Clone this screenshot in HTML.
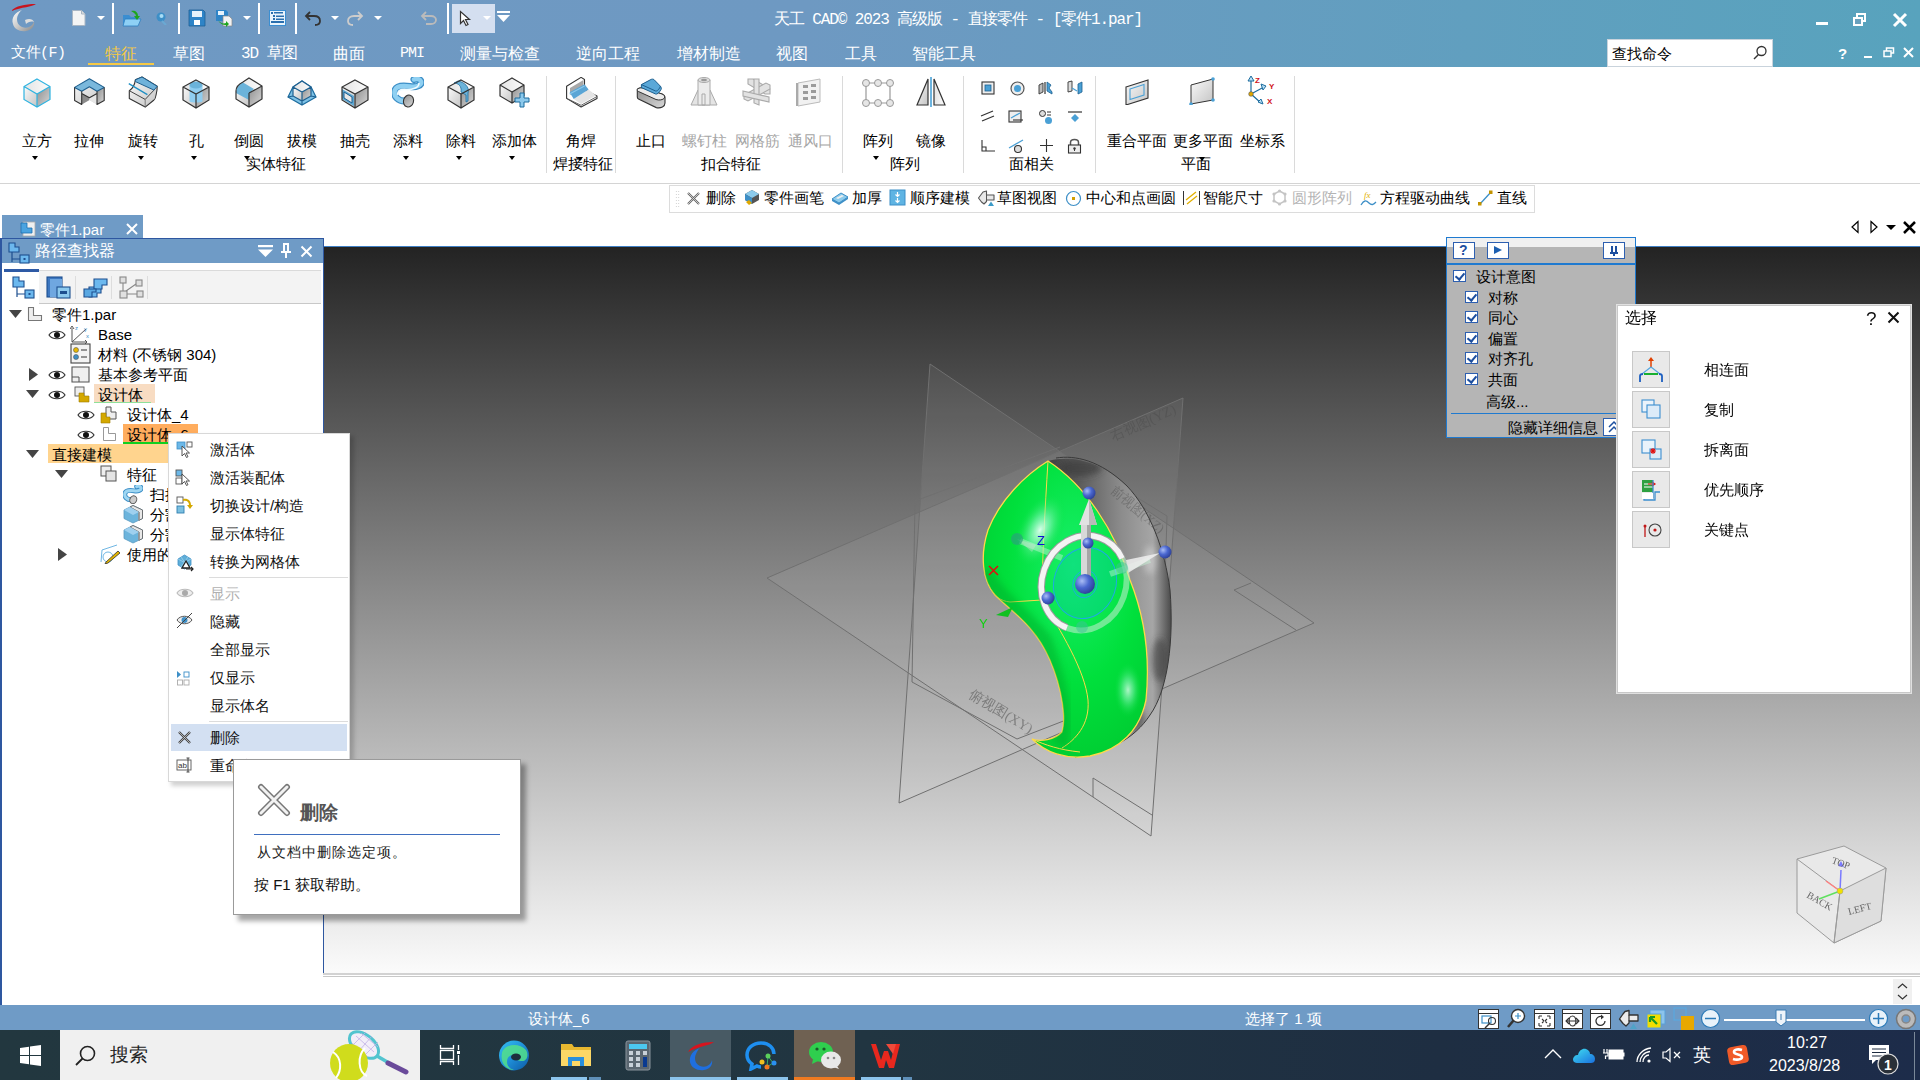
<!DOCTYPE html>
<html><head><meta charset="utf-8">
<style>
*{box-sizing:border-box;margin:0;padding:0}
html,body{width:1920px;height:1080px;overflow:hidden;background:#fff;font-family:"Liberation Sans",sans-serif;color:#000}
.a{position:absolute}
.t{position:absolute;white-space:nowrap;line-height:1}
#title{left:0;top:0;width:1920px;height:67px;background:linear-gradient(90deg,#6f99c3 0%,#6e99c2 42%,#58a3bd 100%)}
#ribbon{left:0;top:67px;width:1920px;height:117px;background:#fff;border-bottom:1px solid #d4d4d4}
#vp{left:323px;top:246px;width:1597px;height:727px;background:linear-gradient(180deg,#232323 0%,#393939 10%,#fbfbfb 100%);border-top:1px solid #3f7fc4;overflow:hidden}
#cmdbar{left:323px;top:975px;width:1597px;height:30px;background:#fff;border-top:3px solid #d6d6d6}
#status{left:0;top:1005px;width:1920px;height:26px;background:#6f9bc6}
#taskbar{left:0;top:1031px;width:1920px;height:49px;background:#1c2a3b}
#panel{left:0;top:238px;width:324px;height:768px;background:#fff;border-left:2px solid #2e57a0;border-right:1px solid #2e57a0;border-bottom:1px solid #2e57a0}
#phead{left:0;top:0;width:322px;height:24px;background:#6f9bc6}
.rl{position:absolute;white-space:nowrap;line-height:1;font-size:15px;transform:translateX(-50%)}
.sep{position:absolute;top:76px;width:1px;height:97px;background:#dadada}
.dd{position:absolute;width:0;height:0;border-left:3px solid transparent;border-right:3px solid transparent;border-top:4px solid #000}
</style></head><body>
<svg width="0" height="0" style="position:absolute">
<defs>
 <linearGradient id="gL" x1="0" y1="0" x2="1" y2="1"><stop offset="0" stop-color="#fafafa"/><stop offset="1" stop-color="#c4c4c4"/></linearGradient>
 <linearGradient id="gR" x1="0" y1="0" x2="1" y2="1"><stop offset="0" stop-color="#8e8e8e"/><stop offset="1" stop-color="#d8d8d8"/></linearGradient>
 <linearGradient id="gT" x1="0" y1="0" x2="1" y2="0"><stop offset="0" stop-color="#e4e4e4"/><stop offset="1" stop-color="#fbfbfb"/></linearGradient>
 <linearGradient id="gB" x1="0" y1="0" x2="1" y2="1"><stop offset="0" stop-color="#9dd3f0"/><stop offset="1" stop-color="#4d9dcf"/></linearGradient>
</defs>
</svg>
<div id="title" class="a">
 <svg class="a" style="left:8px;top:2px" width="32" height="32" viewBox="0 0 32 32">
  <defs><linearGradient id="lg1" x1="0" y1="0" x2="1" y2="1"><stop offset="0" stop-color="#fff"/><stop offset=".5" stop-color="#c9c9c9"/><stop offset="1" stop-color="#888"/></linearGradient></defs>
  <path d="M3 9 C8 4 16 2 28 2 C24 5 14 5 3 9Z" fill="#c8141e"/>
  <path d="M14 8 C7 10 3 16 5 22 C6 27 12 30 18 29 C24 28 27 24 26 19 C25 24 20 27 14 25 C9 23 8 17 10 13 C11 11 12 9 14 8Z" fill="url(#lg1)"/>
  <path d="M17 18 C21 16 25 17 26 20 C23 19 20 20 18 22Z" fill="#ddd"/>
 </svg>
 <svg class="a" style="left:70px;top:9px" width="18" height="18"><path d="M2.5 1.5h9l3.5 3.5v11.5h-12.5z" fill="#f4f4f4" stroke="#a9b6c4"/><path d="M11.5 1.5v3.5h3.5" fill="#ddd" stroke="#a9b6c4"/></svg>
 <svg class="a" style="left:97px;top:16px" width="8" height="5"><path d="M0 0h8l-4 4z" fill="#fff"/></svg>
 <div class="a" style="left:112px;top:3px;width:2px;height:31px;background:#fff"></div>
 <svg class="a" style="left:122px;top:9px" width="20" height="18"><path d="M1 6h6l2 2h7v8H1z" fill="#3b8ed1"/><path d="M3 10h16l-3 7H1z" fill="#8ed0f5" stroke="#2f7fc0" stroke-width=".8"/><path d="M9 2c4-1 7 1 7 5h2l-3 4-3-4h2c0-2-2-3-5-5z" fill="#1ea51e"/></svg>
 <svg class="a" style="left:154px;top:11px" width="14" height="14"><circle cx="7" cy="6" r="4.5" fill="#3d8fc7"/><circle cx="7.5" cy="5" r="2" fill="#a8dcf5"/><path d="M8 10l4 4" stroke="#6aa9d3" stroke-width="2"/></svg>
 <div class="a" style="left:178px;top:3px;width:2px;height:31px;background:#fff"></div>
 <svg class="a" style="left:188px;top:9px" width="18" height="18"><path d="M1 1h14l2 2v14H1z" fill="#2e84c7" stroke="#1f5f96" stroke-width=".8"/><rect x="4" y="2" width="10" height="6" fill="#e6f2fb"/><rect x="6" y="11" width="6" height="5" fill="#fff"/></svg>
 <svg class="a" style="left:215px;top:9px" width="18" height="18"><path d="M1 1h10l2 2v9H1z" fill="#2e84c7"/><rect x="3" y="2" width="6" height="4" fill="#e6f2fb"/><path d="M8 7h6l3 3v7H8z" fill="#f2f2f2" stroke="#888" stroke-width=".7"/><path d="M3 11c2 3 5 4 8 3v-2l3 3-3 3v-2c-3 0-6-1-8-5z" fill="#1ea51e"/></svg>
 <svg class="a" style="left:243px;top:16px" width="8" height="5"><path d="M0 0h8l-4 4z" fill="#fff"/></svg>
 <div class="a" style="left:258px;top:3px;width:2px;height:31px;background:#fff"></div>
 <svg class="a" style="left:269px;top:10px" width="17" height="16"><rect x=".5" y=".5" width="16" height="15" fill="#e9f4fc" stroke="#3b8ed1"/><rect x="2" y="2" width="2" height="2" fill="#2a6fae"/><rect x="5" y="2" width="9" height="1.5" fill="#2a6fae"/><rect x="4" y="5" width="2" height="2" fill="#2a6fae"/><rect x="7" y="5.5" width="8" height="1.5" fill="#2a6fae"/><rect x="4" y="8" width="2" height="2" fill="#2a6fae"/><rect x="7" y="8.5" width="8" height="1.5" fill="#2a6fae"/><rect x="2" y="11" width="13" height="2" fill="#2a6fae"/></svg>
 <div class="a" style="left:295px;top:3px;width:2px;height:31px;background:#fff"></div>
 <svg class="a" style="left:304px;top:9px" width="18" height="18"><path d="M6 3L2 7l4 4M2 7h8c4 0 6 2 6 5s-2 4-5 4" fill="none" stroke="#333" stroke-width="1.8"/></svg>
 <svg class="a" style="left:331px;top:16px" width="8" height="5"><path d="M0 0h8l-4 4z" fill="#fff"/></svg>
 <svg class="a" style="left:346px;top:9px" width="18" height="18"><path d="M12 3l4 4-4 4M16 7H8C4 7 2 9 2 12s2 4 5 4" fill="none" stroke="#ccc" stroke-width="1.8"/></svg>
 <svg class="a" style="left:374px;top:16px" width="8" height="5"><path d="M0 0h8l-4 4z" fill="#fff"/></svg>
 <svg class="a" style="left:420px;top:9px" width="18" height="18"><path d="M6 3L2 7l4 4M2 7h9c3 0 5 2 5 4s-2 4-5 4H6" fill="none" stroke="#bbb" stroke-width="1.8"/></svg>
 <div class="a" style="left:447px;top:3px;width:2px;height:31px;background:#fff"></div>
 <div class="a" style="left:452px;top:4px;width:43px;height:29px;background:#d4dff0"></div>
 <svg class="a" style="left:459px;top:10px" width="13" height="17"><path d="M1.5 1.5v12l3-3 2.5 5 2-1-2.5-5h4z" fill="#fff" stroke="#333" stroke-width="1.2"/></svg>
 <svg class="a" style="left:483px;top:16px" width="8" height="5"><path d="M0 0h8l-4 4z" fill="#fff"/></svg>
 <svg class="a" style="left:497px;top:11px" width="13" height="12"><rect x="0" y="0" width="13" height="2" fill="#fff"/><path d="M0 4h13l-6.5 7z" fill="#fff"/></svg>
 <div class="t" style="left:774px;top:12px;font-size:16px;color:#fff;font-family:'Liberation Mono',monospace;letter-spacing:-1.1px">天工 CAD© 2023 高级版 - 直接零件 - [零件1.par]</div>
 <div class="a" style="left:1816px;top:22px;width:12px;height:3px;background:#fff"></div>
 <svg class="a" style="left:1853px;top:13px" width="14" height="14"><rect x="4" y="1" width="8" height="7" fill="none" stroke="#fff" stroke-width="2"/><rect x="1" y="5" width="8" height="7" fill="#6aa1bd" stroke="#fff" stroke-width="2"/></svg>
 <svg class="a" style="left:1892px;top:12px" width="16" height="16"><path d="M2 2l12 12M14 2L2 14" stroke="#fff" stroke-width="3"/></svg>
 <div class="t" style="left:11px;top:46px;font-size:15px;color:#fff;font-family:'Liberation Mono',monospace;letter-spacing:-0.5px">文件(F)</div>
 <div class="t" style="left:105px;top:46px;font-size:16px;color:#f6c945">特征</div>
 <div class="a" style="left:88px;top:63px;width:66px;height:2px;background:#f6c945"></div>
 <div class="t" style="left:173px;top:46px;font-size:16px;color:#fff">草图</div>
 <div class="t" style="left:241px;top:46px;font-size:16px;color:#fff;font-family:'Liberation Mono',monospace;letter-spacing:-1px">3D 草图</div>
 <div class="t" style="left:333px;top:46px;font-size:16px;color:#fff">曲面</div>
 <div class="t" style="left:400px;top:46px;font-size:15px;color:#fff;font-family:'Liberation Mono',monospace;letter-spacing:-1px">PMI</div>
 <div class="t" style="left:460px;top:46px;font-size:16px;color:#fff">测量与检查</div>
 <div class="t" style="left:576px;top:46px;font-size:16px;color:#fff">逆向工程</div>
 <div class="t" style="left:677px;top:46px;font-size:16px;color:#fff">增材制造</div>
 <div class="t" style="left:776px;top:46px;font-size:16px;color:#fff">视图</div>
 <div class="t" style="left:845px;top:46px;font-size:16px;color:#fff">工具</div>
 <div class="t" style="left:912px;top:46px;font-size:16px;color:#fff">智能工具</div>
 <div class="a" style="left:1607px;top:39px;width:166px;height:28px;background:#fff;border:1px solid #c9d3dc"></div>
 <div class="t" style="left:1612px;top:46px;font-size:15px;color:#000">查找命令</div>
 <svg class="a" style="left:1752px;top:45px" width="16" height="16"><circle cx="9.5" cy="6" r="4.5" fill="none" stroke="#333" stroke-width="1.3"/><path d="M6.5 9.5L2 14" stroke="#333" stroke-width="1.5"/></svg>
 <div class="t" style="left:1838px;top:46px;font-size:15px;color:#fff;font-weight:bold">?</div>
 <div class="a" style="left:1864px;top:56px;width:8px;height:2px;background:#fff"></div>
 <svg class="a" style="left:1883px;top:47px" width="12" height="11"><rect x="3.5" y="1" width="7" height="5" fill="none" stroke="#fff" stroke-width="1.5"/><rect x="1" y="4" width="7" height="5.5" fill="#5ba2bd" stroke="#fff" stroke-width="1.5"/></svg>
 <svg class="a" style="left:1903px;top:47px" width="11" height="11"><path d="M1 1l9 9M10 1L1 10" stroke="#fff" stroke-width="2"/></svg>
</div>


<div id="ribbon" class="a">
<!-- icons: top offset is relative to ribbon (67) -->
<svg class="a" style="left:22px;top:11px" width="30" height="30" viewBox="0 0 30 30"><path d="M2 8.5L15 16V29L2 21.5Z" fill="url(#gL)"/><path d="M28 8.5V21.5L15 29V16Z" fill="url(#gR)"/><path d="M15 1L28 8.5L15 16L2 8.5Z" fill="url(#gT)"/><path d="M15 1L28 8.5V21.5L15 29L2 21.5V8.5ZM2 8.5L15 16L28 8.5M15 16V29" fill="none" stroke="#2fb3e0" stroke-width="1.2"/></svg>
<svg class="a" style="left:74px;top:10px" width="32" height="31" viewBox="0 0 32 31"><path d="M0.6 10.4L15.4 1.7L30.2 10.4V23.5L23 27.4L15.4 23L7.7 27.4L0.6 23.5Z" fill="url(#gL)"/><path d="M7.7 16.4L15.4 20.8V23L7.7 27.4Z" fill="#8a8a8a"/><path d="M15.4 20.8L23 16.4V27.4L15.4 23Z" fill="#e6e6e6"/><path d="M23 14.2L30.2 10.4V23.5L23 27.4Z" fill="url(#gR)"/><path d="M0.6 10.4L15.4 1.7L30.2 10.4L23 14.2L15.4 9.8L7.7 14.2Z" fill="#7ab8dc" stroke="#1d5f8f" stroke-width="1.1" stroke-linejoin="round"/><path d="M0.6 10.4V23.5L7.7 27.4V14.2M7.7 16.4L15.4 20.8L23 16.4M23 14.2V27.4L30.2 23.5V10.4" fill="none" stroke="#333" stroke-width="1.1" stroke-linejoin="round"/></svg>
<svg class="a" style="left:128px;top:77px;top:9px" width="31" height="33" viewBox="0 0 31 33"><path d="M7.4 3.8L14 1L29.2 10.3L29 14C28 20 27 24 26 24L17.2 31.1L1.3 22.4V14.7C4 13 6.5 10 7.4 3.8Z" fill="url(#gL)" stroke="#333" stroke-width="1.1" stroke-linejoin="round"/><path d="M1.3 14.7L17.2 23.4L26 14.1" fill="none" stroke="#444" stroke-width="1"/><path d="M17.2 23.4V31" stroke="#666" stroke-width=".8"/><path d="M7.4 3.8L14 1L29.2 10.3L26 14.1L7.4 5.6Z" fill="#6fb2da" stroke="#1d5f8f" stroke-width="1"/><path d="M0.8 7.6L19.4 18.6" stroke="#1e8fc4" stroke-width="1.3"/></svg>
<svg class="a" style="left:181px;top:11px" width="30" height="31" viewBox="0 0 30 31"><path d="M2 9L15 16V30L2 22Z" fill="url(#gL)"/><path d="M28 9V22L15 30V16Z" fill="url(#gR)"/><path d="M15 2L28 9L15 16L2 9Z" fill="url(#gT)"/><path d="M8.5 7V23C8.5 25 21.5 25 21.5 23V7Z" fill="#8fcdf0"/><ellipse cx="15" cy="7" rx="6.5" ry="3.5" fill="#6bb3da"/><path d="M15 2L28 9V22L15 30L2 22V9ZM2 9L15 16L28 9M15 16V30" fill="none" stroke="#333" stroke-width="1.2"/></svg>
<svg class="a" style="left:234px;top:10px" width="30" height="31" viewBox="0 0 30 31"><path d="M2 9L15 16V30L2 22Z" fill="url(#gL)"/><path d="M28 9V22L15 30V16Z" fill="url(#gR)"/><path d="M15 1L28 9L15 16L2 9Z" fill="url(#gT)"/><path d="M9 5.5L20 12C17 14 15 17 15 23L2 16C2 11 5 7 9 5.5Z" fill="#6bb3da"/><path d="M15 1L28 9V22L15 30L2 22V14C2 10 5 7 9 5ZM15 16V30M28 9L15 16" fill="none" stroke="#333" stroke-width="1.2"/></svg>
<svg class="a" style="left:286px;top:12px" width="32" height="28" viewBox="0 0 32 28"><path d="M7 8L16 2L25 8L30 18L16 26L2 18Z" fill="#7ec2e6" stroke="#1d6d9f" stroke-width="1.2"/><path d="M7 8L16 13V22L7 17Z" fill="url(#gL)"/><path d="M25 8V17L16 22V13Z" fill="url(#gR)"/><path d="M16 2L25 8L16 13L7 8Z" fill="url(#gT)"/><path d="M16 2L25 8V17L16 22L7 17V8ZM7 8L16 13L25 8M16 13V22M2 18L7 17M30 18L25 17M16 26V22" fill="none" stroke="#1d5f8f" stroke-width="1.2"/></svg>
<svg class="a" style="left:340px;top:11px" width="30" height="31" viewBox="0 0 30 31"><path d="M2 9L15 16V30L2 22Z" fill="url(#gL)"/><path d="M28 9V22L15 30V16Z" fill="url(#gR)"/><path d="M15 2L28 9L15 16L2 9Z" fill="url(#gT)"/><path d="M2 11L14 18V28L2 21Z" fill="#5fa8d3"/><path d="M4 14L12 19V25L4 20Z" fill="#e8e8e8" stroke="#1d5f8f"/><path d="M15 2L28 9V22L15 30L2 22V9ZM2 9L15 16L28 9M15 16V30" fill="none" stroke="#333" stroke-width="1.2"/></svg>
<svg class="a" style="left:392px;top:10px" width="32" height="31" viewBox="0 0 32 31"><path d="M15 24C6 25 1 19 3 13C5 8 12 8.5 18 9.5C24 10.5 30 8.5 29 4.5C28 1.5 24 1.5 22 2.5" fill="none" stroke="#3d8fc7" stroke-width="7" stroke-linecap="round"/><path d="M15 24C6 25 1 19 3 13C5 8 12 8.5 18 9.5C24 10.5 30 8.5 29 4.5C28 1.5 24 1.5 22 2.5" fill="none" stroke="#8fd0f2" stroke-width="4.5" stroke-linecap="round"/><path d="M6 18C5 14 8 12 14 12.5C20 13 27 11 27 6" fill="none" stroke="#f0fbff" stroke-width="1.6"/><ellipse cx="16.5" cy="24" rx="5" ry="6" transform="rotate(15 16.5 24)" fill="url(#gR)" stroke="#333" stroke-width="1.1"/></svg>
<svg class="a" style="left:446px;top:11px" width="30" height="31" viewBox="0 0 30 31"><path d="M2 9L15 16V30L2 22Z" fill="url(#gL)"/><path d="M28 9V22L15 30V16Z" fill="url(#gR)"/><path d="M15 2L28 9L15 16L2 9Z" fill="url(#gT)"/><path d="M8 5C12 5 16 8 15 14L20 17V24L22 23V15C24 9 18 4 12 3Z" fill="#6bb3da" stroke="#1d6d9f" stroke-width=".8"/><path d="M15 2L28 9V22L15 30L2 22V9ZM2 9L15 16L28 9M15 16V30" fill="none" stroke="#333" stroke-width="1.2"/></svg>
<svg class="a" style="left:498px;top:10px" width="32" height="32" viewBox="0 0 32 32"><path d="M2 8L14 15V26L2 19Z" fill="url(#gL)"/><path d="M26 8V19L14 26V15Z" fill="url(#gR)"/><path d="M14 1L26 8L14 15L2 8Z" fill="url(#gT)"/><path d="M14 1L26 8V19L14 26L2 19V8ZM2 8L14 15L26 8M14 15V26" fill="none" stroke="#333" stroke-width="1.2"/><path d="M19 22H24V17H28V22H33V26H28V31H24V26H19Z" transform="translate(-2 -1)" fill="#8cc9ec" stroke="#1d6d9f" stroke-width="1"/></svg>
<div class="sep" style="left:546px;top:9px"></div>
<svg class="a" style="left:565px;top:10px" width="33" height="32" viewBox="0 0 33 32"><path d="M1.6 9.2L16.1 0.4L19.5 2.5V13L32 19V21.5L16.1 30L1.6 21.4Z" fill="#fff" stroke="#333" stroke-width="1.1" stroke-linejoin="round"/><path d="M5 11L18.5 3V10L5 18Z" fill="#a8a8a8"/><path d="M8.7 22.1L23.6 12.6L31 18.5L16 27Z" fill="#e4e4e4"/><path d="M4.6 15.3L19.5 7.2L23.6 12.6L8.7 22.1Z" fill="#5aa5d5"/><path d="M4.6 17L19.5 9" stroke="#8cc8ea" stroke-width="1.2"/><path d="M1.6 21.4L16.1 28.3L32 19.5" fill="none" stroke="#555" stroke-width=".9"/></svg>
<div class="sep" style="left:615px;top:9px"></div>
<svg class="a" style="left:636px;top:10px" width="31" height="32" viewBox="0 0 31 32"><path d="M1.3 12.6C1.3 11.5 4 10.5 6.8 11L26 17C28.5 18 29 19.5 29 21V26C29 29.5 25 31.5 20.3 30.6L2.5 22C1.5 21.5 1.3 21 1.3 20Z" fill="url(#gR)" stroke="#333" stroke-width="1.1"/><path d="M1.3 12.6C1.3 11.5 4 10.5 6.8 11L26 17C28.5 18 29 19.5 28.5 21C27 23 23 23.5 20 22.5L2.5 14.5C1.5 14 1.3 13.5 1.3 12.6Z" fill="#ececec" stroke="#333" stroke-width="1"/><path d="M5.4 7.6L14.9 2.5C16 2 17 2 18 2.6L24.4 9.2C25.5 10.5 25.5 12 25 12.6C23 16 21 17.5 19.6 17L5.4 10.6Z" fill="#5aa8d8" stroke="#1d5f8f" stroke-width="1"/><path d="M5.4 7.6L19.6 14C21 14.5 23.5 12 24.4 9.2" fill="none" stroke="#1d5f8f" stroke-width="1"/></svg>
<svg class="a" style="left:689px;top:9px" width="30" height="32" viewBox="0 0 30 32"><path d="M2 29L9 14H21L28 29Z" fill="#e4e4e4" stroke="#aaa" stroke-width="1"/><path d="M9 4V29H21V4Z" fill="#ececec" stroke="#aaa" stroke-width="1"/><ellipse cx="15" cy="4" rx="6" ry="2.5" fill="#ddd" stroke="#aaa"/><ellipse cx="15" cy="4" rx="3" ry="1.2" fill="#999"/><path d="M13 18H16V29H13Z" fill="none" stroke="#aaa"/></svg>
<svg class="a" style="left:741px;top:10px" width="32" height="30" viewBox="0 0 32 30"><g fill="#e2e2e2" stroke="#aaa" stroke-width="1.1"><path d="M7 2L12 2L29 12V17L24 17L7 7Z"/><path d="M3 18L25 6L29 8V12L7 24L3 22Z"/><path d="M13 2L18 2V28L13 26Z"/><path d="M2 14L28 20V25L2 19Z"/></g></svg>
<svg class="a" style="left:795px;top:10px" width="30" height="30" viewBox="0 0 30 30"><path d="M3 6L25 2V25L3 29Z" fill="#f1f1f1" stroke="#bbb" stroke-width="1"/><path d="M1 6V29L3 29V6Z" fill="#aaa"/><g fill="#9b9b9b"><rect x="8" y="8" width="5" height="3"/><rect x="16" y="7" width="5" height="3"/><rect x="8" y="14" width="5" height="3"/><rect x="16" y="13" width="5" height="3"/><rect x="8" y="20" width="5" height="3"/><rect x="16" y="19" width="5" height="3"/></g></svg>
<div class="sep" style="left:842px;top:9px"></div>
<svg class="a" style="left:862px;top:11px" width="32" height="30" viewBox="0 0 32 30"><g fill="none" stroke="#999" stroke-width="1.2"><path d="M4 5H28V25H4Z"/></g><g fill="#e6e6e6" stroke="#999" stroke-width="1"><circle cx="4" cy="5" r="3.5"/><circle cx="16" cy="5" r="3.5"/><circle cx="28" cy="5" r="3.5"/><circle cx="4" cy="25" r="3.5"/><circle cx="16" cy="25" r="3.5"/><circle cx="28" cy="25" r="3.5"/></g></svg>
<svg class="a" style="left:915px;top:9px" width="32" height="32" viewBox="0 0 32 32"><path d="M13 3L2 29H13Z" fill="url(#gL)" stroke="#333" stroke-width="1.2"/><path d="M19 3L30 29H19Z" fill="url(#gT)" stroke="#333" stroke-width="1.2"/><path d="M16 1V31" stroke="#3d9bd4" stroke-width="1.5"/></svg>
<div class="sep" style="left:963px;top:9px"></div>
<!-- small face icons -->
<svg class="a" style="left:981px;top:14px" width="14" height="14"><rect x="1" y="1" width="12" height="12" fill="#eee" stroke="#333" stroke-width="1.1"/><rect x="4" y="4" width="6" height="6" fill="#4aa0d5" stroke="#1d5f8f" stroke-width=".8"/></svg>
<svg class="a" style="left:1010px;top:14px" width="15" height="15"><circle cx="7.5" cy="7.5" r="6.5" fill="#eee" stroke="#555" stroke-width="1.2"/><circle cx="7.5" cy="7.5" r="3.5" fill="#4aa0d5"/></svg>
<svg class="a" style="left:1038px;top:13px" width="16" height="16"><path d="M1 5L5 3V12L1 14Z" fill="#bbb" stroke="#333" stroke-width=".9"/><path d="M7 2V14" stroke="#333" stroke-width="1.2"/><path d="M9 2L13 5L11 8L14 12V14L9 11Z" fill="#4aa0d5" stroke="#1d5f8f" stroke-width=".8"/></svg>
<svg class="a" style="left:1067px;top:13px" width="16" height="16"><path d="M1 2L5 1V11L1 12Z" fill="#ddd" stroke="#333" stroke-width=".9"/><path d="M5 8L10 11" stroke="#4aa0d5" stroke-width="1.2"/><path d="M11 4L15 2V12L11 14Z" fill="#4aa0d5" stroke="#1d5f8f" stroke-width=".8"/></svg>
<svg class="a" style="left:980px;top:43px" width="15" height="14"><path d="M1 6L13 1M2 11L14 6" stroke="#333" stroke-width="1.2"/></svg>
<svg class="a" style="left:1008px;top:42px" width="16" height="15"><rect x="1" y="2" width="12" height="11" fill="#eee" stroke="#333" stroke-width="1.1"/><path d="M3 9L12 4" stroke="#4aa0d5" stroke-width="1.3"/><path d="M5 11H15" stroke="#333" stroke-width="1.1"/></svg>
<svg class="a" style="left:1038px;top:42px" width="16" height="16"><circle cx="4.5" cy="4.5" r="3" fill="#ddd" stroke="#333"/><circle cx="10.5" cy="11.5" r="3.5" fill="#4aa0d5"/><path d="M9 3H13M9 6H13" stroke="#333"/></svg>
<svg class="a" style="left:1067px;top:43px" width="16" height="14"><path d="M1 2H15" stroke="#333" stroke-width="1.2"/><path d="M8 4L12 8L8 12L4 8Z" fill="#4aa0d5"/></svg>
<svg class="a" style="left:980px;top:71px" width="16" height="16"><path d="M2 2V13H15M2 9H6V13" fill="none" stroke="#333" stroke-width="1.1"/></svg>
<svg class="a" style="left:1008px;top:71px" width="17" height="16"><path d="M1 10L15 2" stroke="#4aa0d5" stroke-width="1.3"/><circle cx="10" cy="11" r="3.5" fill="#ddd" stroke="#333" stroke-width="1.1"/></svg>
<svg class="a" style="left:1039px;top:71px" width="15" height="15"><path d="M7.5 1V14M1 7.5H14" stroke="#333" stroke-width="1.1"/></svg>
<svg class="a" style="left:1067px;top:70px" width="15" height="17"><path d="M3.5 8V5.5C3.5 1.5 11.5 1.5 11.5 5.5V8" fill="none" stroke="#555" stroke-width="1.5"/><rect x="1.5" y="8" width="12" height="8" fill="#eee" stroke="#333" stroke-width="1.1"/><circle cx="7.5" cy="11.5" r="1.2" fill="#333"/><path d="M7.5 12V14" stroke="#333"/></svg>
<div class="sep" style="left:1095px;top:9px"></div>
<svg class="a" style="left:1124px;top:12px" width="30" height="26" viewBox="0 0 30 26"><path d="M2 8L24 1V19L2 26Z" fill="url(#gL)" stroke="#333" stroke-width="1.1"/><path d="M6 10L20 5.5V16L6 20.5Z" fill="none" stroke="#4aa0d5" stroke-width="1.1"/></svg>
<svg class="a" style="left:1188px;top:10px" width="30" height="28" viewBox="0 0 30 28"><path d="M3 8L25 2V23L3 27Z" fill="url(#gL)" stroke="#333" stroke-width="1"/><g fill="#4aa0d5"><circle cx="25" cy="2" r="1.8"/><circle cx="25" cy="23" r="1.8"/><circle cx="3" cy="27" r="1.8"/></g></svg>
<svg class="a" style="left:1246px;top:8px" width="32" height="32" viewBox="0 0 32 32"><path d="M5 19V3M5 19L18 12M5 19L15 28" stroke="#1d6d9f" stroke-width="1.2" fill="none"/><path d="M2 6L5 1L8 6Z" fill="#b8dff5" stroke="#1d6d9f"/><path d="M15 9L20 11L17 15Z" fill="#b8dff5" stroke="#1d6d9f"/><path d="M12 27L17 29L15 24Z" fill="#b8dff5" stroke="#1d6d9f"/><circle cx="5" cy="19" r="2.3" fill="#e0a800" stroke="#555" stroke-width=".6"/><text x="9" y="8" font-size="8" font-weight="bold" fill="#d0141b" font-family="Liberation Sans">Z</text><text x="23" y="14" font-size="8" font-weight="bold" fill="#d0141b" font-family="Liberation Sans">Y</text><text x="21" y="29" font-size="8" font-weight="bold" fill="#d0141b" font-family="Liberation Sans">X</text></svg>
<div class="sep" style="left:1294px;top:9px"></div>
<!-- labels (top = center y - 67 - 7.5) -->
<div class="rl" style="left:37px;top:66px">立方</div>
<div class="rl" style="left:89px;top:66px">拉伸</div>
<div class="rl" style="left:143px;top:66px">旋转</div>
<div class="rl" style="left:196px;top:66px">孔</div>
<div class="rl" style="left:249px;top:66px">倒圆</div>
<div class="rl" style="left:302px;top:66px">拔模</div>
<div class="rl" style="left:355px;top:66px">抽壳</div>
<div class="rl" style="left:408px;top:66px">添料</div>
<div class="rl" style="left:461px;top:66px">除料</div>
<div class="rl" style="left:514px;top:66px">添加体</div>
<div class="rl" style="left:276px;top:89px">实体特征</div>
<div class="rl" style="left:581px;top:66px">角焊</div>
<div class="rl" style="left:583px;top:89px">焊接特征</div>
<div class="rl" style="left:651px;top:66px">止口</div>
<div class="rl" style="left:704px;top:66px;color:#a6a6a6">螺钉柱</div>
<div class="rl" style="left:757px;top:66px;color:#a6a6a6">网格筋</div>
<div class="rl" style="left:810px;top:66px;color:#a6a6a6">通风口</div>
<div class="rl" style="left:731px;top:89px">扣合特征</div>
<div class="rl" style="left:878px;top:66px">阵列</div>
<div class="rl" style="left:931px;top:66px">镜像</div>
<div class="rl" style="left:905px;top:89px">阵列</div>
<div class="rl" style="left:1031px;top:89px">面相关</div>
<div class="rl" style="left:1137px;top:66px">重合平面</div>
<div class="rl" style="left:1203px;top:66px">更多平面</div>
<div class="rl" style="left:1262px;top:66px">坐标系</div>
<div class="rl" style="left:1196px;top:89px">平面</div>
<!-- dropdown arrows (y=158 -> 91) -->
<div class="dd" style="left:32px;top:89px"></div>
<div class="dd" style="left:138px;top:89px"></div>
<div class="dd" style="left:191px;top:89px"></div>
<div class="dd" style="left:244px;top:89px"></div>
<div class="dd" style="left:350px;top:89px"></div>
<div class="dd" style="left:403px;top:89px"></div>
<div class="dd" style="left:456px;top:89px"></div>
<div class="dd" style="left:509px;top:89px"></div>
<div class="dd" style="left:577px;top:90px"></div>
<div class="dd" style="left:873px;top:89px"></div>
<div class="dd" style="left:1199px;top:90px"></div>
</div>

<div class="a" style="left:669px;top:185px;width:866px;height:28px;background:#fff;border:1px solid #dcdcdc"></div>
<div class="a" style="left:675px;top:190px;width:5px;height:17px;background-image:radial-gradient(circle,#c8c8c8 0.7px,transparent 0.8px);background-size:2.5px 3px"></div>
<svg class="a" style="left:686px;top:191px" width="15" height="15"><path d="M2 2L13 13M13 2L2 13" stroke="#fff" stroke-width="4"/><path d="M2 2L13 13M13 2L2 13" stroke="#666" stroke-width="2.2"/><path d="M2 2L13 13M13 2L2 13" stroke="#ddd" stroke-width=".8"/></svg>
<div class="t" style="left:706px;top:190px;font-size:15px">删除</div>
<svg class="a" style="left:743px;top:189px" width="17" height="17"><path d="M2 5L9 1L16 5V11L9 15L2 11Z" fill="#555"/><path d="M2 5L9 1L16 5L9 9Z" fill="#8ccbec"/><path d="M2 5L9 9V15L2 11Z" fill="#3d8fc7"/><path d="M3 13L6 16L9 14L6 11Z" fill="#e0a800"/></svg>
<div class="t" style="left:764px;top:190px;font-size:15px">零件画笔</div>
<svg class="a" style="left:831px;top:191px" width="18" height="15"><path d="M1 8L10 2L17 6L8 12Z" fill="#8ccbec" stroke="#3d8fc7"/><path d="M1 8V10L8 14L17 8V6L8 12Z" fill="#3d8fc7"/><path d="M5 7L11 4L13 5L7 8Z" fill="#eee"/></svg>
<div class="t" style="left:852px;top:190px;font-size:15px">加厚</div>
<svg class="a" style="left:889px;top:189px" width="17" height="17"><rect x="1" y="1" width="15" height="15" fill="#5fb4e3" stroke="#3d8fc7"/><path d="M8.5 3V7M6.5 5.5L8.5 7.5L10.5 5.5M8.5 9V13M6.5 11.5L8.5 13.5L10.5 11.5" stroke="#fff" stroke-width="1.2" fill="none"/></svg>
<div class="t" style="left:910px;top:190px;font-size:15px">顺序建模</div>
<svg class="a" style="left:977px;top:189px" width="20" height="18"><path d="M6 3L9.5 2V6H17V11H9.5V12.5L7 15L4.5 13L1.5 9L4.5 5Z" fill="#e8e8e8" stroke="#555" stroke-width="1.1" stroke-linejoin="round"/><path d="M9.5 6V11" stroke="#555"/><path d="M11 17L14 12.5L17 17Z" fill="#3d9bc8"/></svg>
<div class="t" style="left:997px;top:190px;font-size:15px">草图视图</div>
<svg class="a" style="left:1065px;top:190px" width="17" height="17"><circle cx="8.5" cy="8.5" r="7" fill="none" stroke="#3d8fc7" stroke-width="1.2"/><rect x="7" y="7" width="3" height="3" fill="#d39e00"/></svg>
<div class="t" style="left:1086px;top:190px;font-size:15px">中心和点画圆</div>
<svg class="a" style="left:1182px;top:190px" width="19" height="16"><path d="M1.5 1V15M17.5 1V15" stroke="#333" stroke-width="1"/><path d="M4 10L14 2M5 14L15 6" stroke="#e2b000" stroke-width="1.3"/></svg>
<div class="t" style="left:1203px;top:190px;font-size:15px">智能尺寸</div>
<svg class="a" style="left:1271px;top:189px" width="17" height="17"><path d="M8.5 2L14 5V12L8.5 15L3 12V5Z" fill="none" stroke="#c4c4c4" stroke-width="1.5"/><g fill="#c4c4c4"><circle cx="8.5" cy="2" r="1.6"/><circle cx="14" cy="5" r="1.6"/><circle cx="14" cy="12" r="1.6"/><circle cx="8.5" cy="15" r="1.6"/><circle cx="3" cy="12" r="1.6"/><circle cx="3" cy="5" r="1.6"/></g></svg>
<div class="t" style="left:1292px;top:190px;font-size:15px;color:#b4b4b4">圆形阵列</div>
<svg class="a" style="left:1360px;top:189px" width="17" height="18"><text x="4" y="9" font-size="9" font-style="italic" fill="#e2b000" font-family="Liberation Serif">fx</text><path d="M1 16C4 11 6 11 9 14C12 17 14 15 16 13" fill="none" stroke="#3d8fc7" stroke-width="1.3"/></svg>
<div class="t" style="left:1380px;top:190px;font-size:15px">方程驱动曲线</div>
<svg class="a" style="left:1478px;top:190px" width="15" height="16"><path d="M2 14L13 2" stroke="#3d8fc7" stroke-width="1.3"/><rect x="0" y="12" width="3.5" height="3.5" fill="#c39300"/><rect x="11" y="0.5" width="3.5" height="3.5" fill="#c39300"/></svg>
<div class="t" style="left:1497px;top:190px;font-size:15px">直线</div>
<!-- document tab -->
<div class="a" style="left:2px;top:215px;width:141px;height:24px;background:#6f9bc6"></div>
<svg class="a" style="left:20px;top:221px" width="16" height="16"><rect x="3" y="1" width="12" height="14" fill="#f0f0f0" stroke="#aaa" stroke-width=".8"/><path d="M1 2H7V7H12V12H1Z" fill="#4aa3e0" stroke="#1d6fb0" stroke-width=".8"/></svg>
<div class="t" style="left:40px;top:222px;font-size:15px;color:#fff">零件1.par</div>
<svg class="a" style="left:126px;top:223px" width="12" height="12"><path d="M1 1L11 11M11 1L1 11" stroke="#fff" stroke-width="2"/></svg>
<!-- right tab nav -->
<svg class="a" style="left:1850px;top:220px" width="10" height="14"><path d="M8 1.5L2 7L8 12.5Z" fill="none" stroke="#000" stroke-width="1.2"/></svg>
<svg class="a" style="left:1869px;top:220px" width="10" height="14"><path d="M2 1.5L8 7L2 12.5Z" fill="none" stroke="#000" stroke-width="1.2"/></svg>
<svg class="a" style="left:1885px;top:224px" width="12" height="8"><path d="M1 1H11L6 6Z" fill="#000"/></svg>
<svg class="a" style="left:1902px;top:220px" width="15" height="15"><path d="M2 2L13 13M13 2L2 13" stroke="#000" stroke-width="2.5"/></svg>

<div id="vp" class="a"></div>
<svg class="a" style="left:323px;top:247px" width="1597" height="728" viewBox="323 247 1597 728">
<defs>
 <filter id="blur3"><feGaussianBlur stdDeviation="3"/></filter>
 <radialGradient id="gGreen" cx="0.55" cy="0.35" r="0.8"><stop offset="0" stop-color="#19f06a"/><stop offset=".5" stop-color="#00e03c"/><stop offset="1" stop-color="#00c52e"/></radialGradient>
 <radialGradient id="hl1" cx=".5" cy=".5" r=".5"><stop offset="0" stop-color="#e6fff4" stop-opacity=".95"/><stop offset=".4" stop-color="#8ff7c0" stop-opacity=".6"/><stop offset="1" stop-color="#00e03c" stop-opacity="0"/></radialGradient>
 <linearGradient id="gRim" x1="0" y1="0" x2="1" y2="0"><stop offset="0" stop-color="#3a3a3a"/><stop offset=".3" stop-color="#5c5c5c"/><stop offset=".62" stop-color="#8c8c8c"/><stop offset=".86" stop-color="#a6a6a6"/><stop offset="1" stop-color="#4a4a4a"/></linearGradient>
 <linearGradient id="gRing" x1="0" y1="0" x2="1" y2="1"><stop offset="0" stop-color="#fff"/><stop offset="1" stop-color="#bbb"/></linearGradient>
 <radialGradient id="gBall" cx=".35" cy=".35" r=".7"><stop offset="0" stop-color="#aabdf5"/><stop offset=".5" stop-color="#4a67d0"/><stop offset="1" stop-color="#2c3f96"/></radialGradient>
</defs>
<!-- planes -->
<path d="M930 364L1314 623L899 803Z" fill="#fff" opacity=".06"/>
<path d="M767 578L1183 398L1151 836Z" fill="#fff" opacity=".06"/>
<g fill="none" stroke="#707070" stroke-width="1">
 <path d="M930 364L1314 623M930 364L899 803M767 578L1151 836M767 578L1183 398M1183 398L1151 836M899 803L1314 623"/>
 <path d="M915 501L912 682L1017 739L1066 720"/>
 <path d="M915 501L1060 447"/>
 <path d="M1234 590L1251 583M1234 590L1296 630"/>
 <path d="M1093 778L1093 797M1093 778L1152 815"/>
 <path d="M1167 516L1162 680M1167 516L1117 485"/>
</g>
<!-- gray rim (back) -->
<path id="rimp" d="M1048 461C1070 455 1100 460 1127 486C1150 510 1165 550 1170 590C1174 640 1168 690 1150 715C1135 738 1110 752 1075 757L1040 744L1090 748C1120 740 1140 730 1146 700C1150 660 1146 620 1130 580C1115 530 1085 485 1048 461Z" fill="url(#gRim)"/>
<path d="M1056 458C1075 455 1100 460 1127 486C1150 510 1165 550 1170 590C1174 640 1168 690 1150 715C1135 738 1110 752 1075 757" fill="none" stroke="#3a3a3a" stroke-width="1"/>
<clipPath id="rimclip"><path d="M1048 461C1070 455 1100 460 1127 486C1150 510 1165 550 1170 590C1174 640 1168 690 1150 715C1135 738 1110 752 1075 757L1040 744L1090 748C1120 740 1140 730 1146 700C1150 660 1146 620 1130 580C1115 530 1085 485 1048 461Z"/></clipPath>
<g clip-path="url(#rimclip)" filter="url(#blur3)">
 <ellipse cx="1080" cy="468" rx="22" ry="8" fill="#3a3a3a" opacity=".7"/>
 <ellipse cx="1160" cy="660" rx="8" ry="22" fill="#3a3a3a" opacity=".6"/>
 <ellipse cx="1150" cy="560" rx="6" ry="14" fill="#ddd" opacity=".5"/>
 <ellipse cx="1135" cy="720" rx="10" ry="12" fill="#444" opacity=".6"/>
</g>
<!-- green body -->
<path d="M1048 461C1025 475 1000 500 988 530C980 555 982 580 995 595C1010 610 1035 625 1050 660C1063 690 1066 720 1062 732C1055 740 1040 742 1032 739C1045 752 1065 760 1090 756C1120 750 1140 730 1146 700C1150 660 1146 620 1130 580C1115 530 1085 485 1048 461Z" fill="url(#gGreen)" stroke="#ffd84a" stroke-width="1.3"/>
<path d="M988 584C994 596 1000 601 1010 602L1042 600" fill="none" stroke="#ffd84a" stroke-width="1"/>
<path d="M1048 461C1045 510 1042 560 1042 600C1060 630 1085 670 1088 700C1090 725 1075 740 1062 748" fill="none" stroke="#ffd84a" stroke-width="1"/>
<path d="M1032 739C1045 745 1060 750 1080 752" fill="none" stroke="#ffd84a" stroke-width="1"/>
<clipPath id="bodyclip"><path d="M1048 461C1025 475 1000 500 988 530C980 555 982 580 995 595C1010 610 1035 625 1050 660C1063 690 1066 720 1062 732C1055 740 1040 742 1032 739C1045 752 1065 760 1090 756C1120 750 1140 730 1146 700C1150 660 1146 620 1130 580C1115 530 1085 485 1048 461Z"/></clipPath>
<g clip-path="url(#bodyclip)"><path d="M985 570C995 595 1015 605 1045 640C1060 680 1068 720 1060 745" fill="none" stroke="#00a82a" stroke-width="14" opacity=".45" filter="url(#blur3)"/></g>
<ellipse cx="1040" cy="530" rx="22" ry="40" transform="rotate(25 1040 530)" fill="url(#hl1)"/>
<ellipse cx="1128" cy="690" rx="14" ry="28" fill="url(#hl1)" opacity=".8"/>
<g font-family="Liberation Serif,serif" font-size="14">
 <text transform="translate(1113 441) rotate(-24)" fill="#404040" opacity=".3">右视图(YZ)</text>
 <text transform="translate(1110 492) rotate(40)" font-size="13" fill="#404040" opacity=".35">前视图(XZ)</text>
 <text transform="translate(968 697) rotate(31)" fill="#505050" opacity=".55">俯视图(XY)</text>
</g>
<!-- manipulator -->
<ellipse cx="1085" cy="583" rx="31" ry="36" transform="rotate(19 1085 583)" fill="#00c8a0" opacity=".35"/>
<ellipse cx="1085" cy="583" rx="31" ry="36" transform="rotate(19 1085 583)" fill="none" stroke="#1fa8e6" stroke-width="1"/>
<ellipse cx="1085" cy="584" rx="12" ry="14" transform="rotate(19 1085 584)" fill="none" stroke="#1fa8e6" stroke-width=".8"/>
<path d="M1062 558L1020 541M1110 574L1150 560" stroke="#c8f5d8" stroke-width="6" opacity=".45"/>
<path d="M1017 539L1036 545L1032 552Z" fill="#ddd" opacity=".35"/>
<path d="M1126 560L1160 553L1128 573Z" fill="#f0f0f0" opacity=".85"/>
<ellipse cx="1084" cy="583" rx="42" ry="48" transform="rotate(19 1084 583)" fill="none" stroke="#b8ecc8" stroke-opacity=".6" stroke-width="6"/>
<ellipse cx="1084" cy="583" rx="42" ry="48" transform="rotate(19 1084 583)" pathLength="360" fill="none" stroke="#9a9a9a" stroke-width="7.5" stroke-dasharray="0 92 218 50"/>
<ellipse cx="1084" cy="583" rx="42" ry="48" transform="rotate(19 1084 583)" pathLength="360" fill="none" stroke="#f4f4f4" stroke-width="5.5" stroke-dasharray="0 92 218 50"/>
<rect x="1081" y="524" width="10" height="59" fill="#d8d8d8"/><rect x="1087" y="524" width="4" height="59" fill="#a6a6a6"/>
<path d="M1079 525L1089 499L1097 525Z" fill="#e2e2e2"/><path d="M1089 499L1097 525H1089Z" fill="#bababa"/>
<circle cx="1017" cy="539" r="6" fill="#29a37a" opacity=".7"/>
<circle cx="1082" cy="627" r="6" fill="#3fbf9a" opacity=".5"/>
<circle cx="1122" cy="568" r="6" fill="#3fbf9a" opacity=".5"/>
<circle cx="1089" cy="493" r="6.5" fill="url(#gBall)"/>
<circle cx="1088" cy="543" r="5.5" fill="url(#gBall)"/>
<circle cx="1085" cy="584" r="10" fill="url(#gBall)"/>
<circle cx="1048" cy="598" r="6.5" fill="url(#gBall)"/>
<circle cx="1165" cy="552" r="6.5" fill="url(#gBall)"/>
<text x="1037" y="545" font-size="13" fill="#1010d0" font-family="Liberation Sans">Z</text>
<path d="M989 566L998 575M998 566L989 575" stroke="#e01010" stroke-width="1.6"/>
<text x="979" y="628" font-size="13" fill="#10d010" font-family="Liberation Sans">Y</text>
<path d="M996 615L1013 607L1008 617Z" fill="#10c020"/>
<!-- view cube -->
<path d="M1844 846L1886 868L1881 921L1834 943L1797 913L1797 859Z" fill="#e9e9e9" stroke="#9a9a9a" stroke-width="1"/>
<path d="M1840 891L1886 868L1881 921L1834 943Z" fill="#dedede" stroke="#9a9a9a" stroke-width="1"/>
<path d="M1797 859L1840 891L1834 943" fill="none" stroke="#9a9a9a" stroke-width="1"/>
<path d="M1840 891L1841 870" stroke="#7a7aff" stroke-width="1.5"/><path d="M1838 866L1841 861L1844 867Z" fill="#7a7aff"/>
<path d="M1840 891L1826 881" stroke="#ff8080" stroke-width="1.5"/>
<path d="M1840 891L1819 899" stroke="#60e060" stroke-width="1.5"/>
<circle cx="1840" cy="891" r="3" fill="#f0e000" stroke="#999" stroke-width=".5"/>
<g font-family="Liberation Serif,serif" font-size="10" fill="#666">
 <text transform="translate(1806 897) rotate(30)">BACK</text>
 <text transform="translate(1849 915) rotate(-15)">LEFT</text>
 <text transform="translate(1831 863) rotate(20)">TOP</text>
</g>
</svg>

<div id="panel" class="a"></div>
<div class="a" style="left:0;top:238px;width:324px;height:25px;background:#6f9bc6;border-top:1px solid #2e57a0;border-left:2px solid #2e57a0;border-right:1px solid #2e57a0"></div>
<svg class="a" style="left:7px;top:242px" width="24" height="22"><path d="M2 1H8V5H12V10H2Z" fill="#6cb8ee" stroke="#1d4f8f" stroke-width="1.1"/><path d="M5 10V20M5 17H13" stroke="#1d4f8f" stroke-width="1.2"/><rect x="13" y="13" width="9" height="8" fill="#6cb8ee" stroke="#1d4f8f" stroke-width="1.1"/><rect x="16.5" y="16" width="2" height="2" fill="#1d4f8f"/></svg>
<div class="t" style="left:35px;top:243px;font-size:16px;color:#fff">路径查找器</div>
<svg class="a" style="left:258px;top:244px" width="15" height="14"><rect x="0" y="1" width="15" height="2.2" fill="#fff"/><path d="M0 5.5H15L7.5 13Z" fill="#fff"/></svg>
<svg class="a" style="left:280px;top:243px" width="12" height="16"><path d="M3 1H9M4 1V9M8 1V9M1 9H11M6 9V15" stroke="#fff" stroke-width="2" fill="none"/></svg>
<svg class="a" style="left:300px;top:245px" width="13" height="13"><path d="M1.5 1.5L11.5 11.5M11.5 1.5L1.5 11.5" stroke="#fff" stroke-width="2"/></svg>
<!-- tab strip -->
<div class="a" style="left:39px;top:270px;width:282px;height:34px;background:#f3f3f3;border-top:1px solid #dadada;border-bottom:1px solid #c8c8c8"></div>
<div class="a" style="left:4px;top:269px;width:35px;height:3px;background:#2e5aa5"></div>
<div class="a" style="left:75px;top:276px;width:1px;height:23px;background:#ddd"></div>
<div class="a" style="left:111px;top:276px;width:1px;height:23px;background:#ddd"></div>
<div class="a" style="left:147px;top:276px;width:1px;height:23px;background:#ddd"></div>
<svg class="a" style="left:11px;top:275px" width="24" height="24"><path d="M2 2H8V6H13V12H2Z" fill="#6cb8ee" stroke="#1d4f8f" stroke-width="1.1"/><path d="M6 12V22M6 19H14" stroke="#1d4f8f" stroke-width="1.2"/><rect x="14" y="15" width="9" height="8" fill="#6cb8ee" stroke="#1d4f8f" stroke-width="1.1"/><rect x="17.5" y="18" width="2" height="2" fill="#1d4f8f"/></svg>
<svg class="a" style="left:46px;top:276px" width="27" height="24"><rect x="1" y="1" width="15" height="20" fill="#3d77c0" stroke="#1d4f8f" stroke-width="1.1"/><rect x="4" y="3" width="12" height="18" fill="#6fa7e0"/><rect x="11" y="11" width="13" height="11" fill="#8cc9ee" stroke="#1d4f8f" stroke-width="1.1"/><rect x="14" y="15" width="7" height="3" fill="#1d4f8f"/></svg>
<svg class="a" style="left:83px;top:277px" width="26" height="22"><path d="M6 10V20H14V16H18V10Z" fill="#6cb8ee" stroke="#1d4f8f" stroke-width="1.1"/><path d="M11 2V12H19V8H24V2Z" fill="#6cb8ee" stroke="#1d4f8f" stroke-width="1.1"/><path d="M1 12V20H9V15H13V12Z" fill="#5aa8e2" stroke="#1d4f8f" stroke-width="1.1"/></svg>
<svg class="a" style="left:119px;top:276px" width="26" height="24"><g fill="#e0e0e0" stroke="#888" stroke-width="1.1"><rect x="1" y="1" width="6" height="6"/><rect x="17" y="4" width="6" height="6"/><rect x="1" y="15" width="7" height="7"/><rect x="18" y="15" width="6" height="6"/></g><path d="M4 7V15M8 18H18M7 15L17 8" stroke="#888" stroke-width="1.1"/></svg>
<!-- tree -->
<style>.tr{position:absolute;white-space:nowrap;line-height:1;font-size:15px}</style>
<svg class="a" style="left:9px;top:310px" width="14" height="9"><path d="M0 0H13L6.5 8Z" fill="#444"/></svg>
<svg class="a" style="left:27px;top:306px" width="16" height="16"><path d="M1.5 1.5H6.5V9.5H14.5V14.5H1.5Z" fill="#eee" stroke="#777" stroke-width="1.1"/></svg>
<div class="tr" style="left:52px;top:307px">零件1.par</div>
<svg class="a" style="left:48px;top:329px" width="18" height="12"><path d="M1 6C4 1 14 1 17 6C14 11 4 11 1 6Z" fill="#fff" stroke="#333" stroke-width="1.2"/><circle cx="9" cy="6" r="3" fill="#111"/></svg>
<svg class="a" style="left:70px;top:324px" width="22" height="20"><path d="M2 18L16 5M2 18V4M2 18H17" stroke="#555" stroke-width="1" fill="none"/><path d="M0 5L2 2L4 5M15 16L17 18L15 20" stroke="#555" fill="none"/><text x="5" y="6" font-size="6" fill="#3d8fc7" font-family="Liberation Sans">z</text><text x="14" y="7" font-size="6" fill="#3d8fc7" font-family="Liberation Sans">y</text><text x="16" y="14" font-size="6" fill="#3d8fc7" font-family="Liberation Sans">x</text></svg>
<div class="tr" style="left:98px;top:327px">Base</div>
<svg class="a" style="left:70px;top:343px" width="22" height="22"><rect x="1" y="1" width="19" height="19" fill="#f3f3f3" stroke="#444" stroke-width="1.1"/><circle cx="6" cy="7" r="2.5" fill="#e6b800" stroke="#555" stroke-width=".6"/><circle cx="6" cy="14" r="2.5" fill="#3d8fc7" stroke="#555" stroke-width=".6"/><path d="M11 7H17M11 14H17" stroke="#333"/></svg>
<div class="tr" style="left:98px;top:347px">材料 (不锈钢 304)</div>
<svg class="a" style="left:29px;top:368px" width="10" height="14"><path d="M0 0V13L9 6.5Z" fill="#444"/></svg>
<svg class="a" style="left:48px;top:369px" width="18" height="12"><path d="M1 6C4 1 14 1 17 6C14 11 4 11 1 6Z" fill="#fff" stroke="#333" stroke-width="1.2"/><circle cx="9" cy="6" r="3" fill="#111"/></svg>
<svg class="a" style="left:71px;top:366px" width="20" height="18"><path d="M1 1H18V16H1Z" fill="#efefef" stroke="#555" stroke-width="1.1"/><path d="M1 11H8V16" stroke="#555" fill="none"/></svg>
<div class="tr" style="left:98px;top:367px">基本参考平面</div>
<svg class="a" style="left:26px;top:390px" width="14" height="9"><path d="M0 0H13L6.5 8Z" fill="#444"/></svg>
<svg class="a" style="left:48px;top:389px" width="18" height="12"><path d="M1 6C4 1 14 1 17 6C14 11 4 11 1 6Z" fill="#fff" stroke="#333" stroke-width="1.2"/><circle cx="9" cy="6" r="3" fill="#111"/></svg>
<svg class="a" style="left:74px;top:386px" width="18" height="17"><rect x="1" y="1" width="9" height="9" fill="#eee" stroke="#555" stroke-width=".9"/><path d="M5 7H10V10H15V16H5Z" fill="#d4a800" stroke="#a07e00" stroke-width=".6"/></svg>
<div class="a" style="left:94px;top:384px;width:61px;height:19px;background:#f8dcc2"></div>
<div class="a" style="left:94px;top:402px;width:57px;height:1px;background:#8fe09a"></div>
<div class="tr" style="left:98px;top:387px">设计体</div>
<svg class="a" style="left:77px;top:409px" width="18" height="12"><path d="M1 6C4 1 14 1 17 6C14 11 4 11 1 6Z" fill="#fff" stroke="#333" stroke-width="1.2"/><circle cx="9" cy="6" r="3" fill="#111"/></svg>
<svg class="a" style="left:100px;top:406px" width="18" height="18"><path d="M6 1H11V6H16V13H6Z" fill="#eee" stroke="#555" stroke-width="1"/><path d="M1 7H6V11H10V17H1Z" fill="#d4a800" stroke="#a07e00" stroke-width=".6"/></svg>
<div class="tr" style="left:127px;top:407px">设计体_4</div>
<svg class="a" style="left:77px;top:429px" width="18" height="12"><path d="M1 6C4 1 14 1 17 6C14 11 4 11 1 6Z" fill="#fff" stroke="#333" stroke-width="1.2"/><circle cx="9" cy="6" r="3" fill="#111"/></svg>
<svg class="a" style="left:102px;top:426px" width="16" height="16"><path d="M1.5 1.5H6.5V7.5H13.5V14.5H1.5Z" fill="#fff" stroke="#999" stroke-width="1"/></svg>
<div class="a" style="left:123px;top:424px;width:75px;height:19px;background:#ffad5e"></div>
<div class="a" style="left:123px;top:442px;width:45px;height:2px;background:#10d020"></div>
<div class="tr" style="left:127px;top:427px">设计体_6</div>
<svg class="a" style="left:26px;top:450px" width="14" height="9"><path d="M0 0H13L6.5 8Z" fill="#444"/></svg>
<div class="a" style="left:48px;top:444px;width:121px;height:19px;background:#ffd48e"></div>
<div class="tr" style="left:52px;top:447px">直接建模</div>
<svg class="a" style="left:55px;top:470px" width="14" height="9"><path d="M0 0H13L6.5 8Z" fill="#444"/></svg>
<svg class="a" style="left:100px;top:465px" width="18" height="18"><rect x="1" y="1" width="10" height="10" fill="#eee" stroke="#555" stroke-width="1"/><rect x="6" y="6" width="10" height="10" fill="#e4e4e4" stroke="#555" stroke-width="1"/></svg>
<div class="tr" style="left:127px;top:467px">特征</div>
<svg class="a" style="left:123px;top:485px" width="20" height="19" viewBox="0 0 32 31"><path d="M15 24C6 25 1 19 3 13C5 8 12 8.5 18 9.5C24 10.5 30 8.5 29 4.5C28 1.5 24 1.5 22 2.5" fill="none" stroke="#3d8fc7" stroke-width="8" stroke-linecap="round"/><path d="M15 24C6 25 1 19 3 13C5 8 12 8.5 18 9.5C24 10.5 30 8.5 29 4.5C28 1.5 24 1.5 22 2.5" fill="none" stroke="#9ed6f2" stroke-width="5" stroke-linecap="round"/><ellipse cx="16.5" cy="24" rx="5.5" ry="6.5" transform="rotate(25 16.5 24)" fill="#ccc" stroke="#555" stroke-width="1.5"/></svg>
<div class="tr" style="left:150px;top:487px">扫描 1</div>
<svg class="a" style="left:123px;top:504px" width="21" height="20" viewBox="0 0 21 20"><path d="M1 6L10 1.5L19.5 6V14.5L10 19L1 14.5Z" fill="#6cb4dc" stroke="#5a9ac0" stroke-width=".8"/><path d="M10 1.5L19.5 6V14.5L16 16.3V8L7 3Z" fill="#e8e8e8" stroke="#666" stroke-width=".9"/><path d="M16 8V16.3" stroke="#999" stroke-width="1.5"/><path d="M1 6L7 3L16 8L10 11Z" fill="#9fd0ef"/></svg>
<div class="tr" style="left:150px;top:507px">分割 1</div>
<svg class="a" style="left:123px;top:524px" width="21" height="20" viewBox="0 0 21 20"><path d="M1 6L10 1.5L19.5 6V14.5L10 19L1 14.5Z" fill="#6cb4dc" stroke="#5a9ac0" stroke-width=".8"/><path d="M10 1.5L19.5 6V14.5L16 16.3V8L7 3Z" fill="#e8e8e8" stroke="#666" stroke-width=".9"/><path d="M16 8V16.3" stroke="#999" stroke-width="1.5"/><path d="M1 6L7 3L16 8L10 11Z" fill="#9fd0ef"/></svg>
<div class="tr" style="left:150px;top:527px">分割 2</div>
<svg class="a" style="left:58px;top:548px" width="10" height="14"><path d="M0 0V13L9 6.5Z" fill="#444"/></svg>
<svg class="a" style="left:99px;top:544px" width="22" height="20"><path d="M2 18L3 6L18 1" fill="none" stroke="#5faee0" stroke-width=".9"/><circle cx="9" cy="13" r="5" fill="none" stroke="#5faee0" stroke-width=".9"/><path d="M7 18L19 7L21 9L9 19L6 20Z" fill="#e2b400" stroke="#333" stroke-width=".8"/></svg>
<div class="tr" style="left:127px;top:547px">使用的草图</div>

<!-- context menu -->
<div class="a" style="left:171px;top:436px;width:183px;height:350px;background:rgba(0,0,0,.18);filter:blur(2px)"></div>
<div class="a" style="left:168px;top:433px;width:182px;height:349px;background:#fff;border:1px solid #d8d8d8"></div>
<style>.mi{position:absolute;white-space:nowrap;line-height:1;font-size:15px;left:210px;color:#111}</style>
<svg class="a" style="left:176px;top:441px" width="18" height="17"><rect x="1" y="1" width="8" height="7" fill="#6cb8e8" stroke="#3d8fc7" stroke-width=".8"/><rect x="11" y="1" width="5" height="5" fill="#fff" stroke="#555" stroke-width=".9"/><path d="M6 5V15L8.5 12.5L10.5 16.5L12 15.7L10 12H13.5Z" fill="#fff" stroke="#444" stroke-width=".9"/></svg>
<div class="mi" style="top:442px">激活体</div>
<svg class="a" style="left:175px;top:469px" width="18" height="17"><rect x="1" y="1" width="6" height="6" fill="#6cb8e8" stroke="#555" stroke-width=".9"/><rect x="1" y="9" width="6" height="6" fill="#fff" stroke="#555" stroke-width=".9"/><path d="M7 5V15L9.5 12.5L11.5 16.5L13 15.7L11 12H14.5Z" fill="#fff" stroke="#444" stroke-width=".9"/></svg>
<div class="mi" style="top:470px">激活装配体</div>
<svg class="a" style="left:176px;top:496px" width="18" height="18"><rect x="1" y="1" width="6" height="6" fill="#fff" stroke="#555" stroke-width=".9"/><rect x="1" y="10" width="7" height="7" fill="#7cc0e0" stroke="#2f7fb0" stroke-width=".9"/><path d="M7 3C12 2 15 5 15 9L17 9L14 13L11 9L13 9C13 6 11 4 7 5Z" fill="#d4a800"/></svg>
<div class="mi" style="top:498px">切换设计/构造</div>
<div class="mi" style="top:526px">显示体特征</div>
<svg class="a" style="left:176px;top:553px" width="19" height="19"><path d="M2 6L8.5 2L15 6V12L8.5 16L2 12Z" fill="#5faed8" stroke="#3d8fc7" stroke-width=".8"/><path d="M2 6L8.5 9.5L15 6M8.5 9.5V16M5 4L12 14M12 4L5 14" stroke="#a8d8f0" stroke-width=".7" fill="none"/><path d="M6 15L10 8L14 15Z" fill="#fff" stroke="#222" stroke-width="1.3"/><path d="M10 16H17M15 14L17 16L15 18" stroke="#222" stroke-width="1.2" fill="none"/></svg>
<div class="mi" style="top:554px">转换为网格体</div>
<div class="a" style="left:209px;top:577px;width:139px;height:1px;background:#dcdcdc"></div>
<svg class="a" style="left:176px;top:587px" width="18" height="12"><path d="M1 6C4 1 14 1 17 6C14 11 4 11 1 6Z" fill="#eee" stroke="#bbb" stroke-width="1.1"/><circle cx="9" cy="6" r="3" fill="#aaa"/></svg>
<div class="mi" style="top:586px;color:#b0b0b0">显示</div>
<svg class="a" style="left:175px;top:612px" width="19" height="17"><path d="M2 8C5 3 14 3 17 8C14 13 5 13 2 8Z" fill="#eee" stroke="#555" stroke-width="1"/><circle cx="9.5" cy="8" r="3" fill="#3d8fc7"/><path d="M2 16L17 1" stroke="#444" stroke-width="1"/></svg>
<div class="mi" style="top:614px">隐藏</div>
<div class="mi" style="top:642px">全部显示</div>
<svg class="a" style="left:176px;top:670px" width="18" height="16"><path d="M1 1V8L5 4.5Z" fill="#3d8fc7"/><rect x="8" y="2" width="5" height="5" fill="#fff" stroke="#3d8fc7" stroke-width=".9"/><rect x="1.5" y="10" width="5" height="5" fill="#fff" stroke="#aaa" stroke-width=".9"/><rect x="8" y="10" width="5" height="5" fill="#fff" stroke="#aaa" stroke-width=".9"/></svg>
<div class="mi" style="top:670px">仅显示</div>
<div class="mi" style="top:698px">显示体名</div>
<div class="a" style="left:209px;top:721px;width:139px;height:1px;background:#dcdcdc"></div>
<div class="a" style="left:171px;top:724px;width:176px;height:27px;background:#d3e0f2"></div>
<svg class="a" style="left:177px;top:730px" width="15" height="15"><path d="M2 2L13 13M13 2L2 13" stroke="#444" stroke-width="2.4"/><path d="M2 2L13 13M13 2L2 13" stroke="#ddd" stroke-width=".7"/></svg>
<div class="mi" style="top:730px">删除</div>
<svg class="a" style="left:176px;top:757px" width="17" height="17"><rect x="1" y="3" width="14" height="10" fill="#fff" stroke="#555" stroke-width=".9"/><text x="2" y="11" font-size="8" font-family="Liberation Sans" fill="#333">ab</text><path d="M12 1V15M10.5 1H13.5M10.5 15H13.5" stroke="#333" stroke-width=".9"/></svg>
<div class="mi" style="top:758px">重命名</div>
<!-- tooltip -->
<div class="a" style="left:238px;top:764px;width:288px;height:157px;background:rgba(0,0,0,.35);filter:blur(2.5px)"></div>
<div class="a" style="left:233px;top:759px;width:288px;height:156px;background:#fff;border:1px solid #9a9a9a"></div>
<svg class="a" style="left:256px;top:783px" width="36" height="34"><path d="M5 4L31 30M31 4L5 30" stroke="#777" stroke-width="6" stroke-linecap="round"/><path d="M5 4L31 30M31 4L5 30" stroke="#f2f2f2" stroke-width="3" stroke-linecap="round"/></svg>
<div class="t" style="left:300px;top:803px;font-size:19px;font-weight:bold;color:#555;font-family:'Liberation Serif',serif">删除</div>
<div class="a" style="left:254px;top:834px;width:246px;height:1px;background:#3f6fbf"></div>
<div class="t" style="left:257px;top:846px;font-size:14px;color:#222;font-family:'Liberation Mono',monospace;letter-spacing:1px">从文档中删除选定项。</div>
<div class="t" style="left:254px;top:877px;font-size:15px;color:#111">按 F1 获取帮助。</div>

<!-- design intent panel -->
<div class="a" style="left:1446px;top:237px;width:190px;height:201px;background:#b5b5b5;border:1px solid #1f7ad0"></div>
<div class="a" style="left:1447px;top:238px;width:188px;height:9px;background:#f0f0f0"></div>
<div class="a" style="left:1447px;top:263px;width:188px;height:2px;background:#1f7ad0"></div>
<div class="a" style="left:1453px;top:242px;width:22px;height:17px;background:#fff;border:1.5px solid #2d5fb0"></div>
<div class="t" style="left:1459px;top:243px;font-size:14px;font-weight:bold;color:#1d4f9f">?</div>
<div class="a" style="left:1487px;top:242px;width:22px;height:17px;background:#fff;border:1.5px solid #2d5fb0"></div>
<svg class="a" style="left:1493px;top:245px" width="10" height="10"><path d="M1 1L9 5L1 9Z" fill="#1d5fb0"/></svg>
<div class="a" style="left:1603px;top:242px;width:22px;height:17px;background:#fff;border:1.5px solid #2d5fb0"></div>
<svg class="a" style="left:1608px;top:245px" width="12" height="12"><path d="M4 1V7M8 1V7M2 8H10M6 8V11" stroke="#1d4f9f" stroke-width="2" fill="none"/></svg>
<style>.cb{position:absolute;width:13px;height:12px;background:#fff;border:1.2px solid #2d5fb0}.cb:after{content:"";position:absolute;left:3px;top:0px;width:4px;height:7px;border-right:2px solid #1d4f9f;border-bottom:2px solid #1d4f9f;transform:rotate(40deg)}</style>
<div class="cb" style="left:1453px;top:270px"></div><div class="t" style="left:1476px;top:269px;font-size:15px">设计意图</div>
<div class="cb" style="left:1465px;top:291px"></div><div class="t" style="left:1488px;top:290px;font-size:15px">对称</div>
<div class="cb" style="left:1465px;top:311px"></div><div class="t" style="left:1488px;top:310px;font-size:15px">同心</div>
<div class="cb" style="left:1465px;top:332px"></div><div class="t" style="left:1488px;top:331px;font-size:15px">偏置</div>
<div class="cb" style="left:1465px;top:352px"></div><div class="t" style="left:1488px;top:351px;font-size:15px">对齐孔</div>
<div class="cb" style="left:1465px;top:373px"></div><div class="t" style="left:1488px;top:372px;font-size:15px">共面</div>
<div class="t" style="left:1486px;top:394px;font-size:15px">高级...</div>
<div class="a" style="left:1451px;top:413px;width:180px;height:1px;background:#1f7ad0"></div>
<div class="t" style="left:1508px;top:420px;font-size:15px">隐藏详细信息</div>
<div class="a" style="left:1603px;top:418px;width:22px;height:18px;background:#fff;border:1.2px solid #2d5fb0"></div>
<svg class="a" style="left:1607px;top:420px" width="14" height="14"><path d="M2 7L7 2L12 7M2 12L7 7L12 12" stroke="#1d4f9f" stroke-width="1.5" fill="none"/></svg>
<!-- selection panel -->
<div class="a" style="left:1617px;top:305px;width:294px;height:388px;background:#fff;border:1px solid #c8c8c8;box-shadow:0 0 0 1px #e0e0e0"></div>
<div class="t" style="left:1625px;top:310px;font-size:16px">选择</div>
<div class="t" style="left:1866px;top:309px;font-size:19px;color:#111">?</div>
<svg class="a" style="left:1887px;top:311px" width="13" height="13"><path d="M1.5 1.5L11.5 11.5M11.5 1.5L1.5 11.5" stroke="#111" stroke-width="2"/></svg>
<style>.sb{position:absolute;left:1632px;width:38px;height:37px;background:#e9e9e9;border:1px solid #c8c8c8}</style>
<div class="sb" style="top:351px"></div>
<svg class="a" style="left:1637px;top:355px" width="28" height="28"><path d="M14 4V12" stroke="#e04000" stroke-width="1.5"/><path d="M11 6L14 2L17 6Z" fill="#e04000"/><path d="M14 12L5 19M14 12L23 19" stroke="#56a8e0" stroke-width="1.2"/><path d="M7 19H21" stroke="#18b030" stroke-width="2"/><path d="M3 27V21C3 19 5 19 6 19M25 27V21C25 19 23 19 22 19" stroke="#1d5fc0" stroke-width="1.8" fill="none"/></svg>
<div class="sb" style="top:391px"></div>
<svg class="a" style="left:1640px;top:398px" width="24" height="24"><rect x="2" y="2" width="12" height="12" fill="#eaf3fb" stroke="#3d8fd0" stroke-width="1.1"/><rect x="7" y="7" width="13" height="13" fill="#dcebf8" stroke="#3d8fd0" stroke-width="1.1"/></svg>
<div class="sb" style="top:431px"></div>
<svg class="a" style="left:1640px;top:438px" width="24" height="24"><rect x="2" y="2" width="13" height="13" fill="#eaf3fb" stroke="#3d8fd0" stroke-width="1.1"/><rect x="10" y="11" width="11" height="10" fill="#dcebf8" stroke="#3d8fd0" stroke-width="1.1"/><path d="M11 11L15 15M15 11L11 15M13 10V16M10 13H16" stroke="#e01010" stroke-width="1.1"/></svg>
<div class="sb" style="top:471px"></div>
<svg class="a" style="left:1640px;top:478px" width="24" height="24"><rect x="2" y="2" width="11" height="12" fill="#2da040"/><path d="M4 6H13M4 9H13" stroke="#fff" stroke-width="1"/><path d="M8 6H15M12 4L15 6L12 8" stroke="#e01010" stroke-width="1.2" fill="none"/><path d="M13 2V20H4V22H15V14H20" stroke="#3d8fd0" stroke-width="1.3" fill="none"/><rect x="2" y="15" width="11" height="6" fill="#fff"/></svg>
<div class="sb" style="top:511px"></div>
<svg class="a" style="left:1640px;top:518px" width="24" height="24"><path d="M5 9V19" stroke="#c01818" stroke-width="1.3"/><circle cx="5" cy="8" r="1.5" fill="#c01818"/><circle cx="15" cy="12" r="6" fill="none" stroke="#444" stroke-width="1.1"/><circle cx="15" cy="12" r="1.6" fill="#c01818"/></svg>
<div class="t" style="left:1704px;top:362px;font-size:15px">相连面</div>
<div class="t" style="left:1704px;top:402px;font-size:15px">复制</div>
<div class="t" style="left:1704px;top:442px;font-size:15px">拆离面</div>
<div class="t" style="left:1704px;top:482px;font-size:15px">优先顺序</div>
<div class="t" style="left:1704px;top:522px;font-size:15px">关键点</div>

<div class="a" style="left:323px;top:973px;width:1597px;height:32px;background:#fff;border-top:2px solid #d2d2d2"></div>
<div class="a" style="left:323px;top:976px;width:1597px;height:1px;background:#c8c8c8"></div>
<div class="a" style="left:1893px;top:979px;width:19px;height:25px;background:#f0f0f0"></div>
<svg class="a" style="left:1896px;top:981px" width="13" height="21"><path d="M2 7L6.5 3L11 7M2 14L6.5 18L11 14" stroke="#333" stroke-width="1.2" fill="none"/></svg>
<div class="a" style="left:0;top:1005px;width:1920px;height:25px;background:#6f9bc6"></div>
<div class="t" style="left:528px;top:1011px;font-size:15px;color:#fff">设计体_6</div>
<div class="t" style="left:1245px;top:1011px;font-size:15px;color:#fff">选择了 1 项</div>
<style>.wi{position:absolute;top:1009px;width:21px;height:20px;background:#fff;border:1.5px solid #333}.wi:before{content:"";position:absolute;left:0;right:0;top:0;height:3px;border-bottom:1px solid #333}</style>
<div class="wi" style="left:1478px"></div>
<svg class="a" style="left:1480px;top:1013px" width="18" height="16"><rect x="2" y="3" width="9" height="7" fill="none" stroke="#3d8fc7" stroke-width="1.2"/><circle cx="12" cy="8" r="3.5" fill="none" stroke="#333" stroke-width="1.1"/><path d="M9.5 10.5L5 15" stroke="#333" stroke-width="1.5"/></svg>
<svg class="a" style="left:1506px;top:1008px" width="21" height="22"><circle cx="12" cy="8" r="6.5" fill="#fff" stroke="#333" stroke-width="1.4"/><path d="M9 8H15M12 5V11" stroke="#3d8fc7" stroke-width="1.2"/><path d="M7.5 12.5L2 19" stroke="#333" stroke-width="2.5"/></svg>
<div class="wi" style="left:1534px"></div>
<svg class="a" style="left:1537px;top:1014px" width="15" height="14"><path d="M2 2V5M2 2H5M13 2V5M13 2H10M2 12V9M2 12H5M13 12V9M13 12H10M5 5L7 7M10 5L8 7M5 9L7 7M10 9L8 7" stroke="#333" stroke-width="1.1" fill="none"/></svg>
<div class="wi" style="left:1562px"></div>
<svg class="a" style="left:1565px;top:1014px" width="15" height="14"><path d="M1 7H14M4 4L1 7L4 10M11 4L14 7L11 10M7.5 2C3 2 3 12 7.5 12C12 12 12 2 7.5 2" stroke="#333" stroke-width="1.1" fill="none"/></svg>
<div class="wi" style="left:1590px"></div>
<svg class="a" style="left:1594px;top:1014px" width="14" height="14"><path d="M11 7A4.5 4.5 0 1 1 8 2.7" stroke="#333" stroke-width="1.3" fill="none"/><path d="M7 0.5L10 3L7 5.5Z" fill="#333"/></svg>
<svg class="a" style="left:1617px;top:1008px" width="23" height="22"><path d="M8 3.5L12 2.5V7H21V13H12V15L9 18L6 15.5L2.5 11L6 6Z" fill="#ececec" stroke="#333" stroke-width="1.3" stroke-linejoin="round"/><path d="M12 7V13" stroke="#333" stroke-width="1.2"/><path d="M13 21L16.5 15.5L20 21Z" fill="#4fa3c8"/></svg>
<svg class="a" style="left:1645px;top:1008px" width="22" height="22"><rect x="5" y="2" width="15" height="14" fill="#8cc4ec" stroke="#5aa0d8" stroke-width="1"/><rect x="2" y="6" width="14" height="14" fill="#f2de00" stroke="#5aa0d8" stroke-width="1"/><path d="M5 9L12 16M5 9V14M5 9H10" stroke="#1a9a20" stroke-width="2.2" fill="none"/></svg>
<svg class="a" style="left:1673px;top:1007px" width="23" height="24"><rect x="1" y="1" width="12" height="12" fill="none" stroke="#5aa8e0" stroke-width="1.2"/><rect x="8" y="9" width="13" height="14" fill="#e8a800"/></svg>
<svg class="a" style="left:1700px;top:1008px" width="21" height="21"><circle cx="10.5" cy="10.5" r="9" fill="#e8f2fa" stroke="#2a7ab8" stroke-width="1.2"/><path d="M5 10.5H16" stroke="#2a7ab8" stroke-width="1.5"/></svg>
<div class="a" style="left:1724px;top:1019px;width:141px;height:2px;background:#fff"></div>
<svg class="a" style="left:1775px;top:1009px" width="12" height="18"><path d="M1 1H11V13L6 17L1 13Z" fill="#eef4fa" stroke="#3a7ab0" stroke-width="1"/><path d="M6 5V11" stroke="#3a7ab0"/></svg>
<svg class="a" style="left:1868px;top:1008px" width="21" height="21"><circle cx="10.5" cy="10.5" r="9" fill="#e8f2fa" stroke="#2a7ab8" stroke-width="1.2"/><path d="M5 10.5H16M10.5 5V16" stroke="#2a7ab8" stroke-width="1.5"/></svg>
<svg class="a" style="left:1895px;top:1008px" width="22" height="22"><circle cx="11" cy="11" r="9.5" fill="#bbb" stroke="#777" stroke-width="1.5"/><circle cx="11" cy="11" r="4" fill="#6f9bc6" stroke="#888" stroke-width="1.5"/></svg>
<!-- taskbar -->
<div class="a" style="left:0;top:1030px;width:1920px;height:50px;background:linear-gradient(90deg,#22373f 0%,#213541 45%,#1e2e42 75%,#1d2c4a 100%)"></div>
<svg class="a" style="left:20px;top:1045px" width="21" height="21"><path d="M0 3L9 1.7V10H0ZM10 1.5L21 0V10H10ZM0 11H9V19.3L0 18ZM10 11H21V21L10 19.5Z" fill="#fff"/></svg>
<div class="a" style="left:60px;top:1030px;width:360px;height:50px;background:#f0f0f0"></div>
<svg class="a" style="left:74px;top:1044px" width="23" height="23"><circle cx="13.5" cy="9.5" r="7" fill="none" stroke="#222" stroke-width="1.6"/><path d="M8.5 14.5L2 21" stroke="#222" stroke-width="1.8"/></svg>
<div class="t" style="left:110px;top:1045px;font-size:19px;color:#222">搜索</div>
<svg class="a" style="left:328px;top:1030px" width="84" height="50"><ellipse cx="36" cy="15" rx="17" ry="10" transform="rotate(40 36 15)" fill="#f2eef8" stroke="#52c4cf" stroke-width="3"/><path d="M28 6L46 22M24 13L40 27M33 3L50 17M30 22L44 6M36 26L50 12M24 16L38 2" stroke="#c0b0e4" stroke-width=".8"/><path d="M49 26L61 33" stroke="#52c4cf" stroke-width="3.5"/><path d="M60 33L78 42" stroke="#6a4a9a" stroke-width="5" stroke-linecap="round"/><circle cx="21" cy="33" r="19" fill="#d0dc1c"/><path d="M5 22C14 28 14 40 8 48M37 18C29 26 30 42 39 46" fill="none" stroke="#fff" stroke-width="2"/></svg>
<svg class="a" style="left:439px;top:1044px" width="24" height="22"><path d="M1.5 1V4.5H14.5V1M1.5 21V17.5H14.5V21" fill="none" stroke="#fff" stroke-width="1.3"/><rect x="1.5" y="6.5" width="13" height="9" fill="none" stroke="#fff" stroke-width="1.3"/><path d="M19.5 1V6M19.5 11V21" stroke="#fff" stroke-width="1.3"/><rect x="18" y="7" width="3" height="3" fill="#fff"/></svg>
<svg class="a" style="left:497px;top:1039px" width="34" height="33"><defs><linearGradient id="edg" x1="0" y1="0" x2="1" y2="1"><stop offset="0" stop-color="#35c1f1"/><stop offset=".5" stop-color="#1f8fd8"/><stop offset="1" stop-color="#0c59a4"/></linearGradient></defs><circle cx="17" cy="16.5" r="15" fill="url(#edg)"/><path d="M5 14C7 5 22 3 29 11C32 16 30 22 25 22C20 22 18 19 19 16C15 15 10 17 10 23C10 27 13 30 17 31C9 31 3 24 5 14Z" fill="#54e08a" opacity=".85"/><ellipse cx="19" cy="18" rx="5" ry="3.5" fill="#1d2e3d"/></svg>
<svg class="a" style="left:560px;top:1042px" width="32" height="26"><path d="M1 2H12L14 5H31V24H1Z" fill="#e8b830"/><path d="M1 8H31V24H1Z" fill="#fcd766"/><path d="M8 24V15H24V24H20V19H12V24Z" fill="#2a8fdc"/></svg>
<svg class="a" style="left:625px;top:1040px" width="26" height="31"><rect x="1" y="1" width="24" height="29" rx="2" fill="#5a6670" stroke="#8a949c" stroke-width="1"/><rect x="4" y="4" width="18" height="5" fill="#4cc8f0"/><g fill="#c8d0d8"><rect x="4" y="11" width="4" height="4"/><rect x="11" y="11" width="4" height="4"/><rect x="18" y="11" width="4" height="4"/><rect x="4" y="17" width="4" height="4"/><rect x="11" y="17" width="4" height="4"/><rect x="4" y="23" width="4" height="4"/><rect x="11" y="23" width="4" height="4"/></g><rect x="18" y="17" width="4" height="10" fill="#0a3a90"/></svg>
<div class="a" style="left:670px;top:1030px;width:61px;height:50px;background:#485a64"></div>
<svg class="a" style="left:684px;top:1039px" width="34" height="33"><path d="M4 13C8 6 18 3 30 3C25 7 15 7 4 13Z" fill="#d8141e"/><path d="M16 9C9 11 5 17 6 23C7 29 14 32 20 31C26 30 29 26 28 21C27 26 22 29 16 27C11 25 10 19 12 15C13 13 14 10 16 9Z" fill="#1f6fe0"/></svg>
<svg class="a" style="left:745px;top:1040px" width="34" height="31"><path d="M16 3C8 3 2 8 2 15C2 19 4 22 7 24L6 29L12 26C13 26.5 15 27 16 27" fill="none" stroke="#1e8ff0" stroke-width="3.5"/><path d="M16 3C24 3 29 8 29 14" fill="none" stroke="#1e8ff0" stroke-width="3.5"/><path d="M23 16L28 23L22 27Z" fill="none" stroke="#3a6"/><circle cx="23" cy="16" r="2.5" fill="#5bd05b"/><circle cx="29" cy="23" r="2.5" fill="#2a90f0"/><circle cx="22" cy="27" r="2.5" fill="#f07820"/><circle cx="17" cy="22" r="2.5" fill="#f0c020"/></svg>
<div class="a" style="left:794px;top:1030px;width:61px;height:50px;background:#6f6152"></div>
<svg class="a" style="left:808px;top:1041px" width="34" height="29"><ellipse cx="13" cy="11" rx="12" ry="10" fill="#2fce4e"/><path d="M5 18L4 23L10 20Z" fill="#2fce4e"/><ellipse cx="23" cy="19" rx="10" ry="8.5" fill="#e8e8e8"/><path d="M29 25L31 28L25 26Z" fill="#e8e8e8"/><g fill="#1a5a2a"><circle cx="9" cy="8" r="1.6"/><circle cx="16" cy="8" r="1.6"/></g><g fill="#888"><circle cx="20" cy="17" r="1.3"/><circle cx="26" cy="17" r="1.3"/></g></svg>
<svg class="a" style="left:869px;top:1040px" width="33" height="31"><path d="M2 4L10 28H15L17 20L20 28H25L31 4H26L22 20L19 11H15L12 20L7 4Z" fill="#e8281e"/><path d="M17 4H27L24 14Z" fill="#f04a3a"/></svg>
<div class="a" style="left:551px;top:1077px;width:36px;height:3px;background:#8cc4ec"></div>
<div class="a" style="left:589px;top:1077px;width:12px;height:3px;background:#5f8fb8"></div>
<div class="a" style="left:670px;top:1077px;width:61px;height:3px;background:#8cc4ec"></div>
<div class="a" style="left:737px;top:1077px;width:51px;height:3px;background:#8cc4ec"></div>
<div class="a" style="left:794px;top:1077px;width:61px;height:3px;background:#f07a20"></div>
<div class="a" style="left:861px;top:1077px;width:40px;height:3px;background:#8cc4ec"></div>
<div class="a" style="left:903px;top:1077px;width:9px;height:3px;background:#5f8fb8"></div>
<!-- tray -->
<svg class="a" style="left:1544px;top:1048px" width="18" height="11"><path d="M1 10L9 2L17 10" stroke="#fff" stroke-width="1.4" fill="none"/></svg>
<svg class="a" style="left:1572px;top:1046px" width="23" height="18"><defs><linearGradient id="cld" x1="0" y1="0" x2="1" y2="1"><stop offset="0" stop-color="#40e0f0"/><stop offset="1" stop-color="#1a70e0"/></linearGradient></defs><path d="M5 17C1 17 0 13 2 11C3 9 5 9 6 9C7 4 11 2 14 3C17 4 18 6 18 8C21 8 23 10 23 13C23 16 21 17 19 17Z" fill="url(#cld)"/></svg>
<svg class="a" style="left:1602px;top:1047px" width="23" height="15"><path d="M2 2V6M5 2V6M1 6H6V9H3.5V12" stroke="#fff" stroke-width="1.2" fill="none"/><rect x="7" y="3" width="14" height="9" fill="#fff" stroke="#fff"/><rect x="21" y="5.5" width="1.5" height="4" fill="#fff"/></svg>
<svg class="a" style="left:1635px;top:1046px" width="19" height="17"><path d="M2 16C2 9 8 3 16 2M5 16C5 11 9 6 15 5.5M8 16C8 12 11 9 14 9" stroke="#fff" stroke-width="1.3" fill="none"/><circle cx="14" cy="15" r="1.6" fill="#fff"/></svg>
<svg class="a" style="left:1662px;top:1047px" width="20" height="16"><path d="M1 5H4L8 1.5V14.5L4 11H1Z" fill="none" stroke="#fff" stroke-width="1.2"/><path d="M12 5L18 11M18 5L12 11" stroke="#fff" stroke-width="1.3"/></svg>
<div class="t" style="left:1693px;top:1046px;font-size:18px;color:#fff">英</div>
<svg class="a" style="left:1727px;top:1044px" width="22" height="22"><rect x="1" y="2" width="20" height="18" rx="4" fill="#f05a28" transform="rotate(-10 11 11)"/><path d="M15 6C12 5 7 5 7 8C7 11 15 10 15 13C15 16 9 16 6 15" stroke="#fff" stroke-width="2.6" fill="none"/></svg>
<div class="t" style="left:1787px;top:1035px;font-size:16px;color:#fff">10:27</div>
<div class="t" style="left:1769px;top:1058px;font-size:16px;color:#fff">2023/8/28</div>
<svg class="a" style="left:1868px;top:1044px" width="34" height="32"><path d="M1 1H21V16H8L4 20V16H1Z" fill="#fff"/><path d="M4 5H18M4 8.5H18M4 12H14" stroke="#1d2b40" stroke-width="1.2"/><circle cx="20" cy="20" r="10" fill="#2a3038" stroke="#ddd" stroke-width="1.2"/><text x="16" y="25.5" font-size="14" font-weight="bold" fill="#fff" font-family="Liberation Sans">1</text></svg>
<div class="a" style="left:1914px;top:1032px;width:1px;height:48px;background:#7a8898"></div>

</body></html>
